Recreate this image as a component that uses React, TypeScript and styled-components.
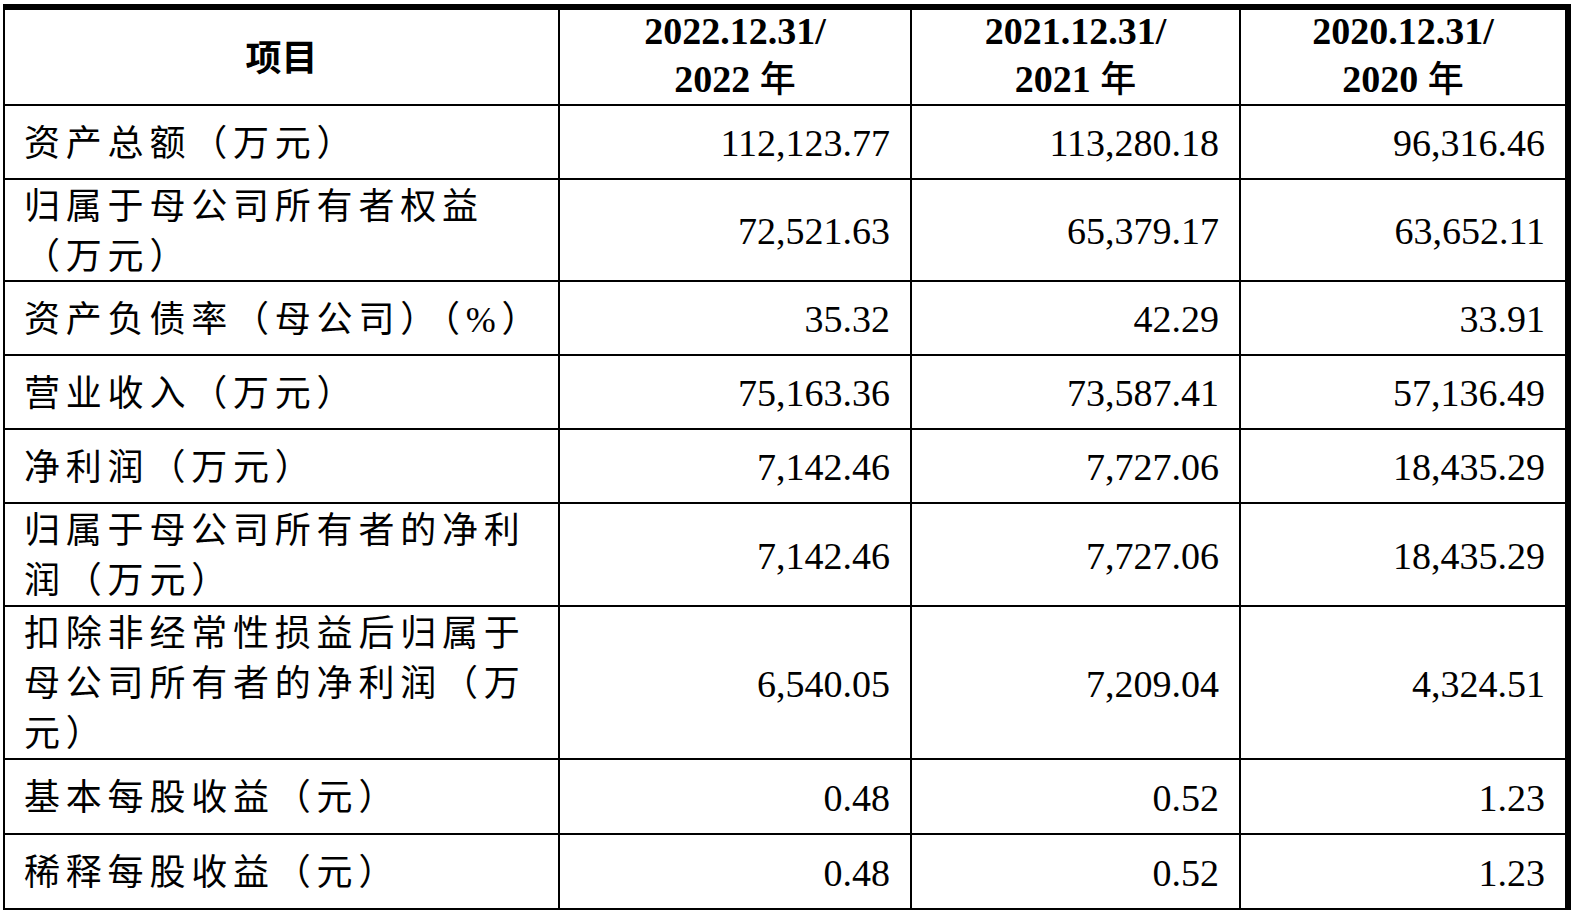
import React from 'react';
import styled, { createGlobalStyle } from 'styled-components';

const GlobalStyle = createGlobalStyle`
  html, body {
    margin: 0;
    padding: 0;
    background: #fff;
    overflow: hidden;
  }
`;

const Page = styled.div`
  padding: 4px 0 0 3px;
  width: 1575px;
  height: 912px;
  box-sizing: border-box;
`;

/* The black background shows through the 2px gaps and forms the rules */
const Sheet = styled.div`
  display: grid;
  grid-template-columns: 553px 350px 327px 324px;
  grid-template-rows: 94px 72px 100px 72px 72px 72px 101px 151px 73px 73px;
  gap: 2px;
  width: max-content;
  background: #000;
  padding: 6px 6px 2px 2px;
  color: #000;
`;

const HeadCell = styled.div`
  background: #fff;
  display: flex;
  flex-direction: column;
  align-items: center;
  justify-content: center;
  font-family: 'Liberation Serif', 'Noto Sans CJK SC', serif;
  font-weight: 700;
  font-size: 38px;
  line-height: 45px;
  padding-bottom: 4px;
  box-sizing: border-box;
`;

const HeadTitle = styled.span`
  font-family: 'Noto Sans CJK SC', sans-serif;
  font-weight: 700;
  font-size: 36px;
`;

const YearChar = styled.span`
  font-family: 'Noto Sans CJK SC', sans-serif;
  font-weight: 500;
  font-size: 36px;
`;

const LabelCell = styled.div`
  background: #fff;
  display: flex;
  flex-direction: column;
  justify-content: center;
  padding: 3px 0 0 19px;
  font-family: 'Liberation Serif', 'Noto Sans CJK SC', serif;
  font-size: 36px;
  line-height: 50px;
  letter-spacing: 5.8px;
  white-space: nowrap;
`;

const ValueCell = styled.div`
  background: #fff;
  display: flex;
  align-items: center;
  justify-content: flex-end;
  padding: 2px 20px 0 0;
  font-family: 'Liberation Serif', serif;
  font-size: 38px;
`;

type Row = { label: string[]; values: [string, string, string] };

const years = ['2022', '2021', '2020'];

const rows: Row[] = [
  { label: ['资产总额（万元）'], values: ['112,123.77', '113,280.18', '96,316.46'] },
  { label: ['归属于母公司所有者权益', '（万元）'], values: ['72,521.63', '65,379.17', '63,652.11'] },
  { label: ['资产负债率（母公司）（%）'], values: ['35.32', '42.29', '33.91'] },
  { label: ['营业收入（万元）'], values: ['75,163.36', '73,587.41', '57,136.49'] },
  { label: ['净利润（万元）'], values: ['7,142.46', '7,727.06', '18,435.29'] },
  { label: ['归属于母公司所有者的净利', '润（万元）'], values: ['7,142.46', '7,727.06', '18,435.29'] },
  {
    label: ['扣除非经常性损益后归属于', '母公司所有者的净利润（万', '元）'],
    values: ['6,540.05', '7,209.04', '4,324.51'],
  },
  { label: ['基本每股收益（元）'], values: ['0.48', '0.52', '1.23'] },
  { label: ['稀释每股收益（元）'], values: ['0.48', '0.52', '1.23'] },
];

export default function App() {
  return (
    <>
      <GlobalStyle />
      <Page>
        <Sheet>
          <HeadCell>
            <HeadTitle>项目</HeadTitle>
          </HeadCell>
          {years.map((y) => (
            <HeadCell key={y}>
              <span>{y}.12.31/</span>
              <span>
                {y} <YearChar>年</YearChar>
              </span>
            </HeadCell>
          ))}
          {rows.map((r, i) => (
            <React.Fragment key={i}>
              <LabelCell>
                {r.label.map((line, j) => (
                  <span key={j}>{line}</span>
                ))}
              </LabelCell>
              {r.values.map((v, k) => (
                <ValueCell key={k}>{v}</ValueCell>
              ))}
            </React.Fragment>
          ))}
        </Sheet>
      </Page>
    </>
  );
}
